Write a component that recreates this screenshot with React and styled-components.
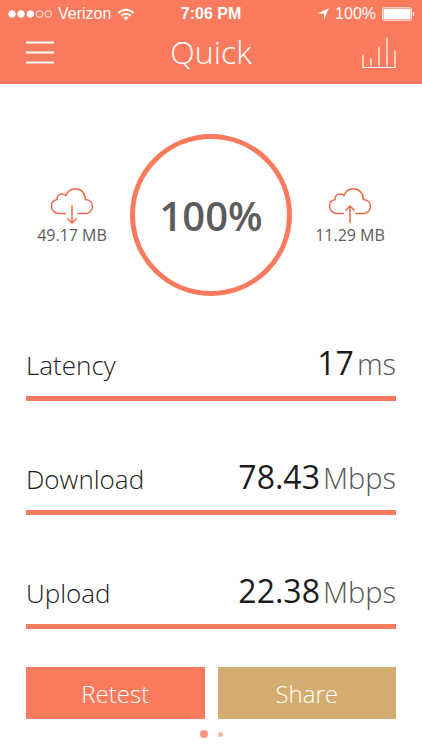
import React from "react";
import styled, { createGlobalStyle } from "styled-components";

const coral = "#fa7a5d";

const CloudIcon = ({ up }) => (
  <Icon width="44" height="38" viewBox="0 0 44 38">
    <path d="M16 26.5H9C4.600 26.500 1.500 23.300 1.500 19.300C1.500 15.800 3.800 13.200 7 12.600C6.700 9.400 9 7 12 7C13.700 7 15 7.500 16 8.500C17.600 4.400 21 1.700 25.300 1.700C31 1.700 35.500 6.200 35.300 12.500C39.500 12.700 42.500 15.500 42.500 19.300C42.500 23.300 39.500 26.500 35.500 26.500H27.500" />
    {up ? (
      <path d="M22 36V19M17.500 23.500L22 19L26.500 23.500" />
    ) : (
      <path d="M22 18V36M17.500 31.500L22 36L26.500 31.500" />
    )}
  </Icon>
);

const Transfer = ({ amount, up }) => (
  <TransferBox>
    <CloudIcon up={up} />
    <Amount>{amount}</Amount>
  </TransferBox>
);

const Metric = ({ name, value, unit }) => (
  <MetricRow>
    <MetricName>{name}</MetricName>
    <MetricValue>
      {value}
      <Unit>{unit}</Unit>
    </MetricValue>
  </MetricRow>
);

const metrics = [
  { name: "Latency", value: "17", unit: "ms" },
  { name: "Download", value: "78.43", unit: "Mbps" },
  { name: "Upload", value: "22.38", unit: "Mbps" }
];

const App = () => {
  return (
    <>
      <GlobalStyle />
      <Header>
        <StatusBar>
          <StatusGroup>
            <svg width="45" height="10" viewBox="0 0 45 10" fill="#fff" stroke="#fff">
              <circle cx="5" cy="5" r="3.300" />
              <circle cx="14" cy="5" r="3.300" />
              <circle cx="23.300" cy="5" r="3.300" />
              <circle cx="32.500" cy="5" r="3.300" fill="none" strokeWidth="0.900" />
              <circle cx="41.200" cy="5" r="3.300" fill="none" strokeWidth="0.900" />
            </svg>
            <span>Verizon</span>
            <svg width="18" height="13" viewBox="0 0 18 13" fill="none" stroke="#fff" strokeWidth="1.900">
              <path d="M1.500 5C5.700 0.700 12.300 0.700 16.500 5" />
              <path d="M4.200 7.800C6.900 5.200 11.100 5.200 13.800 7.800" />
              <path d="M9 12.300L6.300 9.600C7.800 8.200 10.200 8.200 11.700 9.600Z" fill="#fff" stroke="none" />
            </svg>
          </StatusGroup>
          <Time>7:06 PM</Time>
          <StatusGroup $end>
            <svg width="12" height="12" viewBox="0 0 12 12" fill="#fff">
              <path d="M11.800 0.200L7 12V5.500H0.300Z" />
            </svg>
            <span>100%</span>
            <svg width="33" height="14" viewBox="0 0 33 14" fill="#fff">
              <rect x="0.500" y="0.700" width="29" height="12.600" rx="1.500" fill="none" stroke="#fff" strokeWidth="0.800" />
              <rect x="1.500" y="1.700" width="27" height="10.600" rx="0.800" />
              <path d="M30.800 4.700C32.800 5.200 32.800 8.800 30.800 9.300Z" />
            </svg>
          </StatusGroup>
        </StatusBar>
        <NavBar>
          <IconButton aria-label="Menu">
            <svg width="28" height="24" viewBox="0 0 28 24" stroke="#fff" strokeWidth="1.800">
              <path d="M0 2.500H28M0 12.500H28M0 22.500H28" />
            </svg>
          </IconButton>
          <Title>Quick</Title>
          <IconButton aria-label="History" $end>
            <svg width="34" height="34" viewBox="0 0 34 34" fill="none" stroke="#fff" strokeWidth="1.200">
              <path d="M1 19.500V32.500H33V15.500M9 32.500V23.500M17 32.500V11.500M25 32.500V2.500" />
            </svg>
          </IconButton>
        </NavBar>
      </Header>

      <main>
        <Summary>
          <Transfer amount="49.17 MB" />
          <Progress>100%</Progress>
          <Transfer amount="11.29 MB" up />
        </Summary>
        <Metrics>
          {metrics.map(metric => (
            <Metric key={metric.name} {...metric} />
          ))}
        </Metrics>
        <Actions>
          <ActionButton>Retest</ActionButton>
          <ActionButton $color="#d5ac6f">Share</ActionButton>
        </Actions>
        <Pager>
          <Dot $active />
          <Dot />
        </Pager>
      </main>
    </>
  );
};
export default App;

const GlobalStyle = createGlobalStyle`
  * {
    box-sizing: border-box;
  }

  body {
    margin: 0;
    background: #fff;
    font-family: "Open Sans", sans-serif;
  }
`;

const Header = styled.header`
  background: ${coral};
  color: #fff;
  padding-bottom: 8px;
`;

const StatusBar = styled.div`
  display: grid;
  grid-template-columns: 1fr auto 1fr;
  align-items: center;
  height: 28px;
  padding: 0 7px;
  font: 16px/28px "Liberation Sans", Arial, sans-serif;
`;

const StatusGroup = styled.div`
  display: flex;
  align-items: center;
  justify-content: ${props => (props.$end ? "flex-end" : "flex-start")};
  gap: 6px;
`;

const Time = styled.strong`
  font-size: 16px;
`;

const NavBar = styled.nav`
  display: grid;
  grid-template-columns: 1fr auto 1fr;
  align-items: center;
  height: 48px;
  padding: 0 26px;
`;

const IconButton = styled.button`
  display: flex;
  justify-self: ${props => (props.$end ? "end" : "start")};
  padding: 0;
  border: 0;
  background: none;
  cursor: pointer;
`;

const Title = styled.h1`
  margin: 0;
  font-size: 32px;
  font-weight: 300;
  line-height: 48px;
`;

const Summary = styled.section`
  display: flex;
  justify-content: center;
  align-items: center;
  gap: 8px;
  padding-top: 50px;
`;

const TransferBox = styled.div`
  display: flex;
  flex-direction: column;
  align-items: center;
  width: 100px;
  padding-top: 2px;
`;

const Icon = styled.svg`
  fill: none;
  stroke: #ee6847;
  stroke-width: 1.5;
`;

const Amount = styled.span`
  color: #5c5c5c;
  font-size: 16px;
  line-height: 20px;
`;

const Progress = styled.div`
  display: flex;
  justify-content: center;
  align-items: center;
  width: 162px;
  height: 162px;
  border: 5px solid ${coral};
  border-radius: 50%;
  color: #5c5c5c;
  font-size: 40px;
  font-weight: 600;
`;

const Metrics = styled.section`
  display: flex;
  flex-direction: column;
  gap: 56px;
  padding: 47px 26px 38px;
`;

const MetricRow = styled.div`
  display: flex;
  justify-content: space-between;
  align-items: baseline;
  border-bottom: 5px solid ${coral};
  padding-bottom: 11px;
`;

const MetricName = styled.span`
  color: #222;
  font-size: 26px;
  font-weight: 300;
  line-height: 40px;
`;

const MetricValue = styled.span`
  color: #1c1c1c;
  font-size: 32px;
  line-height: 40px;
`;

const Unit = styled.span`
  margin-left: 3px;
  color: #555;
  font-size: 29px;
  font-weight: 300;
`;

const Actions = styled.div`
  display: flex;
  gap: 13px;
  padding: 0 26px;
`;

const ActionButton = styled.button`
  flex: 1;
  height: 52px;
  padding: 0;
  border: 0;
  background: ${props => props.$color || coral};
  color: #fff;
  font-family: inherit;
  font-size: 24px;
  font-weight: 300;
  cursor: pointer;
`;

const Pager = styled.div`
  display: flex;
  justify-content: center;
  align-items: center;
  gap: 10px;
  padding-top: 11px;
`;

const Dot = styled.span`
  width: ${props => (props.$active ? 8 : 5)}px;
  height: ${props => (props.$active ? 8 : 5)}px;
  border-radius: 50%;
  background: ${props => (props.$active ? "#f79683" : "#f6b5ab")};
`;
